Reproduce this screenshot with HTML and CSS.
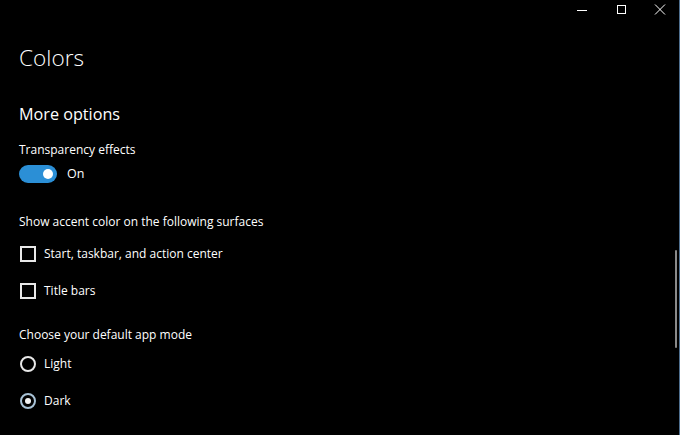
FILE: index.html
```html
<!DOCTYPE html>
<html lang="en">
<head>
<meta charset="utf-8">
<title>Colors</title>
<link rel="stylesheet" href="styles.css">
</head>
<body>
<div class="window">
  <div class="titlebar">
    <div class="cap-btn" aria-label="Minimize">
      <svg width="12" height="12" viewBox="0 0 12 12"><path d="M1 6.5H11" stroke="#fff" stroke-width="1"/></svg>
    </div>
    <div class="cap-btn" aria-label="Maximize">
      <svg width="12" height="12" viewBox="0 0 12 12"><rect x="2.5" y="1.5" width="8" height="8" fill="none" stroke="#fff" stroke-width="1"/></svg>
    </div>
    <div class="cap-btn" aria-label="Close">
      <svg width="12" height="12" viewBox="0 0 12 12"><path d="M1 0.5L11 10.5M11 0.5L1 10.5" stroke="#fff" stroke-width="1"/></svg>
    </div>
  </div>
  <main class="content">
    <h1 class="page-title">Colors</h1>
    <h2 class="section-title">More options</h2>
    <div class="label label-transparency">Transparency effects</div>
    <div class="toggle-row">
      <span class="toggle"><span class="knob"></span></span>
      <span class="toggle-text">On</span>
    </div>
    <div class="label label-accent">Show accent color on the following surfaces</div>
    <div class="option option-first"><span class="checkbox"></span><span>Start, taskbar, and action center</span></div>
    <div class="option option-next"><span class="checkbox"></span><span>Title bars</span></div>
    <div class="label label-mode">Choose your default app mode</div>
    <div class="option option-radio-first"><span class="radio"></span><span>Light</span></div>
    <div class="option option-next"><span class="radio checked"><span class="dot"></span></span><span>Dark</span></div>
  </main>
  <div class="scrollbar"></div>
</div>
</body>
</html>
```
FILE: styles.css
```css
html, body {
  margin: 0;
  padding: 0;
  background: #000;
}
body {
  font-family: "Open Sans", "Noto Sans", sans-serif;
  color: #fff;
  width: 680px;
  height: 435px;
  overflow: hidden;
}
.window {
  position: relative;
  width: 679px;
  height: 435px;
  border-right: 1px solid #4f6f8f;
  background: #000;
}
.titlebar {
  display: flex;
  justify-content: flex-end;
  height: 20px;
}
.cap-btn {
  width: 39px;
  height: 20px;
  display: flex;
  align-items: center;
  justify-content: center;
}
.cap-btn svg {
  display: block;
}
.content {
  padding-left: 19px;
  display: flex;
  flex-direction: column;
  align-items: flex-start;
}
.page-title {
  margin: 20px 0 0;
  font-size: 22.6px;
  font-weight: 300;
  line-height: 36px;
  height: 36px;
}
.section-title {
  margin: 26px 0 0;
  font-size: 16.2px;
  font-weight: 400;
  line-height: 24px;
  height: 24px;
}
.label, .option, .toggle-row {
  font-size: 12px;
  line-height: 20px;
  height: 20px;
  white-space: nowrap;
}
.label-transparency { margin-top: 14px; }
.toggle-row {
  margin-top: 4px;
  display: flex;
  align-items: center;
}
.toggle {
  width: 38px;
  height: 18px;
  border-radius: 9px;
  background: #2b8fd6;
  display: flex;
  align-items: center;
  justify-content: flex-end;
  padding-right: 4px;
  box-sizing: border-box;
}
.knob {
  width: 10px;
  height: 10px;
  border-radius: 50%;
  background: #fff;
}
.toggle-text { margin-left: 10px; font-size: 12.5px; }
.label-accent { margin-top: 28px; }
.option {
  display: flex;
  align-items: center;
  gap: 8px;
  padding-left: 1px;
}
.option-first { margin-top: 12px; }
.option-next { margin-top: 17px; }
.label-mode { margin-top: 24px; }
.option-radio-first { margin-top: 9px; }
.checkbox {
  width: 16px;
  height: 16px;
  border: 2px solid #e8e8e8;
  box-sizing: border-box;
}
.radio {
  width: 16px;
  height: 16px;
  border: 2px solid #e8e8e8;
  border-radius: 50%;
  box-sizing: border-box;
  display: flex;
  align-items: center;
  justify-content: center;
}
.radio.checked {
  border-color: #a8c2d6;
}
.dot {
  width: 6px;
  height: 6px;
  border-radius: 50%;
  background: #f2f2f2;
}
.scrollbar {
  position: absolute;
  right: 2px;
  top: 250px;
  width: 2px;
  height: 98px;
  background: #8a8a8a;
  border-radius: 1px;
}
```
